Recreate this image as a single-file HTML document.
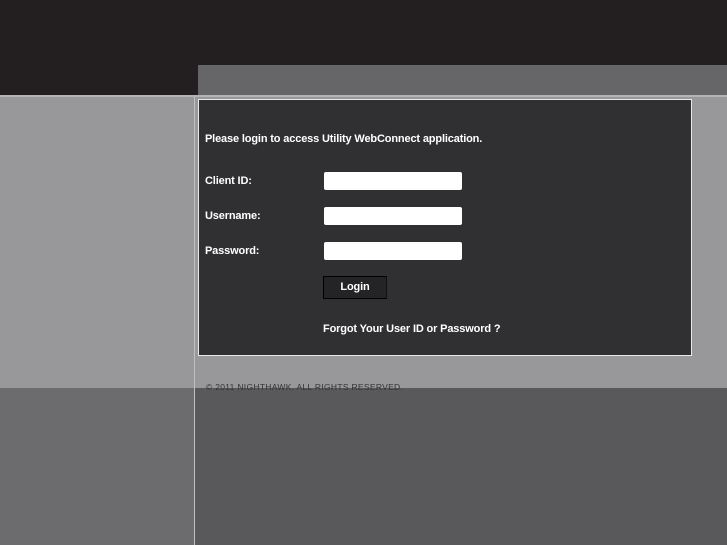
<!DOCTYPE html>
<html><head><style>
html,body{margin:0;padding:0;width:727px;height:545px;overflow:hidden;background:#98989a;font-family:"Liberation Sans",sans-serif;}
.a{position:absolute}
.t{color:#fff;font-weight:bold;font-size:11px;letter-spacing:-0.15px;}
.in{position:absolute;left:125px;width:138px;height:18px;background:#fff;border-radius:2px;}
</style></head><body>
<div class="a" style="left:0;top:0;width:727px;height:95px;background:#231f20"></div>
<div class="a" style="left:198px;top:65px;width:529px;height:30px;background:#666668"></div>
<div class="a" style="left:0;top:95px;width:727px;height:2px;background:#b4b4b6"></div>
<div class="a" style="left:0;top:388px;width:194px;height:157px;background:#6c6c6e"></div>
<div class="a" style="left:195px;top:388px;width:532px;height:157px;background:#59595b"></div>
<div class="a" style="left:194px;top:97px;width:1px;height:448px;background:#c0c0c2"></div>
<div class="a" style="left:198px;top:99px;width:492px;height:255px;background:#303032;border:1px solid #e8e8e8">
 <div class="a t" style="left:6px;top:33px">Please login to access Utility WebConnect application.</div>
 <div class="a t" style="left:6px;top:75px">Client ID:</div>
 <div class="in" style="top:72px"></div>
 <div class="a t" style="left:6px;top:110px">Username:</div>
 <div class="in" style="top:107px"></div>
 <div class="a t" style="left:6px;top:145px">Password:</div>
 <div class="in" style="top:142px"></div>
 <div class="a t" style="left:124px;top:176px;width:64px;height:23px;background:#242426;border:1px solid #000;border-right-color:#111;box-sizing:border-box;text-align:center;line-height:20px;">Login</div>
 <div class="a t" style="left:124px;top:223px">Forgot Your User ID or Password ?</div>
</div>
<div class="a" style="left:206px;top:382px;font-size:8.5px;letter-spacing:0.3px;color:#333">© 2011 NIGHTHAWK. ALL RIGHTS RESERVED.</div>
</body></html>
